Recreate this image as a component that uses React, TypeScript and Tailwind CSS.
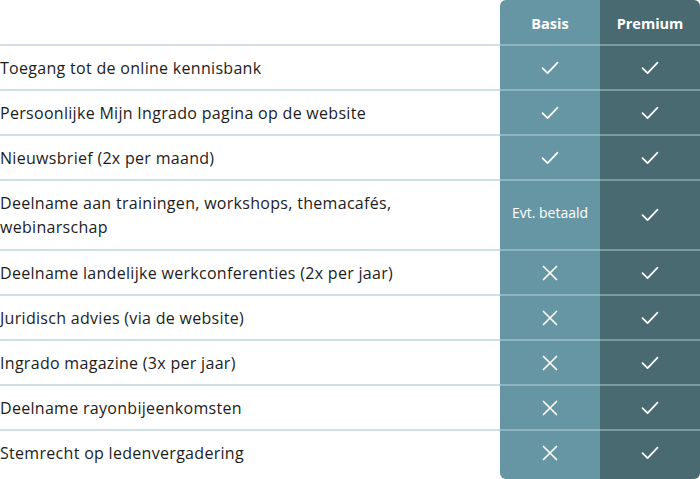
import React from "react";

type Val = "check" | "x" | "paid";
const rows: { label: string; basis: Val; h: string }[] = [
  { label: "Toegang tot de online kennisbank", basis: "check", h: "h-[45px]" },
  { label: "Persoonlijke Mijn Ingrado pagina op de website", basis: "check", h: "h-[45px]" },
  { label: "Nieuwsbrief (2x per maand)", basis: "check", h: "h-[45px]" },
  { label: "Deelname aan trainingen, workshops, themacafés, webinarschap", basis: "paid", h: "h-[70px]" },
  { label: "Deelname landelijke werkconferenties (2x per jaar)", basis: "x", h: "h-[45px]" },
  { label: "Juridisch advies (via de website)", basis: "x", h: "h-[45px]" },
  { label: "Ingrado magazine (3x per jaar)", basis: "x", h: "h-[45px]" },
  { label: "Deelname rayonbijeenkomsten", basis: "x", h: "h-[45px]" },
  { label: "Stemrecht op ledenvergadering", basis: "x", h: "h-[50px] pb-[4px]" },
];

const Check = () => (
  <svg width="18" height="14" viewBox="0 0 18 14" fill="none">
    <path d="M1.5 7.2 L6.6 12.2 L16.5 1.6" stroke="white" strokeWidth="1.7" strokeLinecap="round" strokeLinejoin="round" />
  </svg>
);
const Cross = () => (
  <svg width="16" height="16" viewBox="0 0 16 16" fill="none">
    <path d="M1.5 1.5 L14.5 14.5 M14.5 1.5 L1.5 14.5" stroke="white" strokeWidth="1.7" strokeLinecap="round" />
  </svg>
);

export default function App() {
  return (
    <div className="w-[700px] h-[479px] bg-white overflow-hidden" style={{ fontFamily: "'Open Sans', 'Liberation Sans', sans-serif" }}>
      <div className="flex h-[44px]">
        <div className="w-[500px]" />
        <div className="w-[100px] bg-[#6696a3] rounded-tl-[6px] flex items-center justify-center pt-[4px] text-white font-bold text-[14.5px]">Basis</div>
        <div className="w-[100px] bg-[#4a6a71] rounded-tr-[6px] flex items-center justify-center pt-[4px] text-white font-bold text-[14.5px]">Premium</div>
      </div>
      {rows.map((r, i) => {
        const last = i === rows.length - 1;
        return (
          <div key={i} className="flex">
            <div className={`w-[500px] border-t-2 border-[#cfdfe2] ${r.h} flex items-center pr-[90px] text-[16px] tracking-[0.3px] leading-[24px] text-[#1c1c1c]`}>
              {r.label}
            </div>
            <div className={`w-[100px] border-t-2 border-[#8fb6c0] bg-[#6696a3] ${r.h} flex items-center justify-center ${last ? "rounded-bl-[6px]" : ""}`}>
              {r.basis === "check" ? <Check /> : r.basis === "x" ? <Cross /> : <span className="text-white text-[14px] -mt-[5px]">Evt. betaald</span>}
            </div>
            <div className={`w-[100px] border-t-2 border-[#7d9aa0] bg-[#4a6a71] ${r.h} flex items-center justify-center ${last ? "rounded-br-[6px]" : ""}`}>
              <Check />
            </div>
          </div>
        );
      })}
    </div>
  );
}
